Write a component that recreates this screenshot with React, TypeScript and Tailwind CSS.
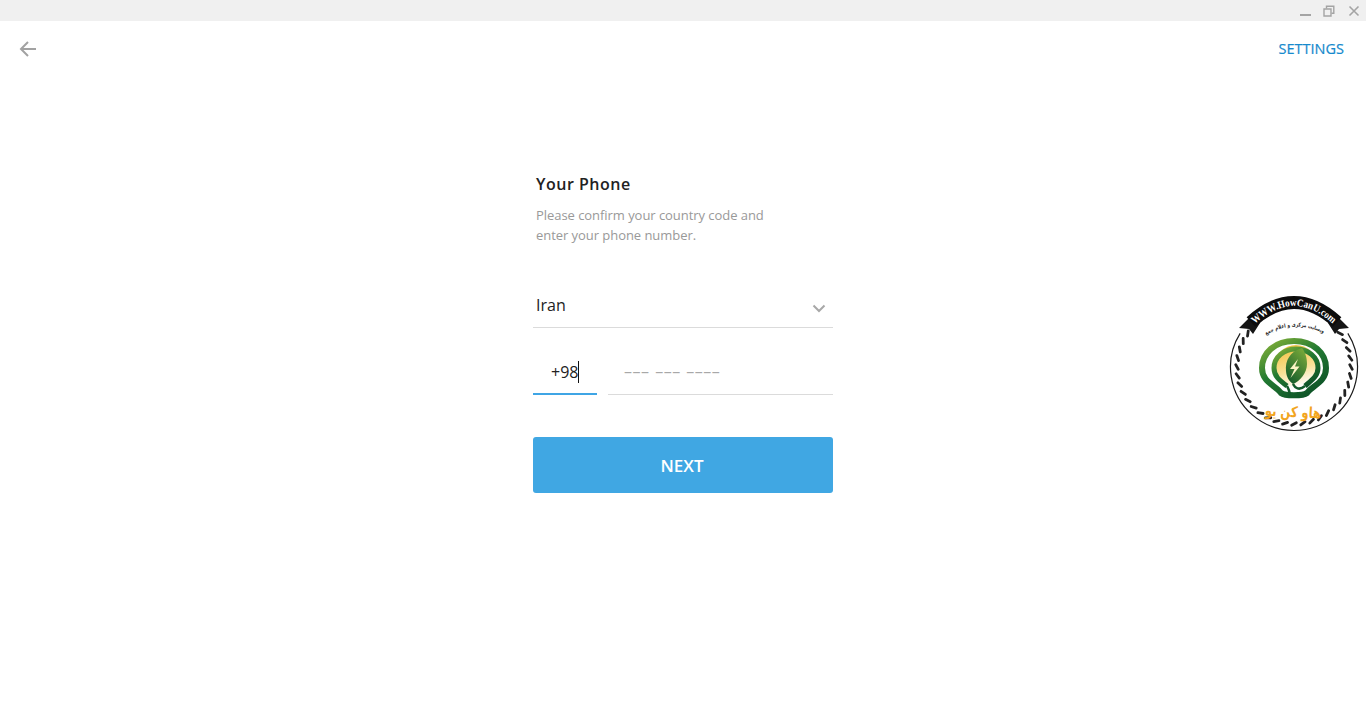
const sans = '"Open Sans", "Noto Sans", sans-serif';

const ropeAngles = Array.from({ length: 40 }, (_, i) => i * 9).filter((a) => a > 52 && a < 308);

function Badge() {
  return (
    <svg width="134" height="140" viewBox="0 0 134 140" className="absolute left-[1227px] top-[293px]">
      <defs>
        <linearGradient id="glow" x1="0.3" y1="0" x2="0.6" y2="1">
          <stop offset="0%" stopColor="#f3c13f" />
          <stop offset="60%" stopColor="#f9e29a" />
          <stop offset="100%" stopColor="#ffffff" />
        </linearGradient>
        <linearGradient id="ring" x1="0.1" y1="0" x2="0.8" y2="1">
          <stop offset="0%" stopColor="#7fae38" />
          <stop offset="45%" stopColor="#237a32" />
          <stop offset="100%" stopColor="#0d5227" />
        </linearGradient>
        <linearGradient id="leaf" x1="0.8" y1="0" x2="0.2" y2="1">
          <stop offset="0%" stopColor="#7aaa3a" />
          <stop offset="100%" stopColor="#125a2a" />
        </linearGradient>
        <path id="ribbonArc" d="M27 32 Q67 -6 107 32" />
        <path id="mottoArc" d="M39 42 Q68 25 100 42" />
      </defs>
      <path d="M13.15 40.35 A63.5 63.5 0 1 0 120.85 40.35" fill="none" stroke="#1b1b1b" strokeWidth="1.2" />
      {ropeAngles.map((a) => (
        <rect
          key={a}
          x="-1.4"
          y="-64"
          width="2.8"
          height="8"
          rx="1.3"
          fill="#222"
          transform={`translate(67 74) rotate(${a}) translate(0 3) rotate(62 0 -60)`}
        />
      ))}
      {/* ribbon */}
      <path d="M23 24 L12 35 L22 36 L26 41 L33 30 Z" fill="#151515" />
      <path d="M111 24 L122 35 L112 36 L108 41 L101 30 Z" fill="#151515" />
      <path d="M24 29 Q67 -10 110 29" fill="none" stroke="#0c0c0c" strokeWidth="13" />
      <text fontSize="10.5" fontWeight="700" fill="white" fontFamily='"Liberation Serif", serif'>
        <textPath href="#ribbonArc" startOffset="1" textLength="88" lengthAdjust="spacingAndGlyphs">
          WWW.HowCanU.com
        </textPath>
      </text>
      <text fontSize="5.5" fontWeight="700" fill="#2a2a2a" fontFamily='"DejaVu Sans", sans-serif'>
        <textPath href="#mottoArc" textLength="60" lengthAdjust="spacingAndGlyphs">
          وبسایت مرکزی و اعلام جمع
        </textPath>
      </text>
      {/* bulb */}
      <path
        d="M67 48 C48 48 35 60 35 75 C35 89 48 92 54 100 C58 103 76 103 80 100 C86 92 99 89 99 75 C99 60 86 48 67 48 Z"
        fill="white"
        stroke="url(#ring)"
        strokeWidth="6"
      />
      <circle cx="69" cy="73" r="21" fill="url(#glow)" />
      <path
        d="M60 93 C52 87 47 83 47 75 C47 64 57 56 69 56 C81 56 91 64 91 75 C91 83 85 87 78 93"
        fill="none"
        stroke="url(#ring)"
        strokeWidth="5"
      />
      <path
        d="M75 55 C63 58 58 68 59 78 C59.500 84 62 88 66 91 C73 88 80 80 80 71 C80 64 78 59 75 55 Z"
        fill="url(#leaf)"
      />
      <path d="M66 91 C68 95 72 98 78 93 M60 93 C62 97 64 100 62 103" fill="none" stroke="#125a2a" strokeWidth="2.500" />
      <path d="M71 66 L63 76 L67.500 76 L63.500 85 L72.500 73.500 L68 73.500 Z" fill="#fbf3c4" />
      {/* brand name */}
      <text
        x="66"
        y="124"
        textAnchor="middle"
        fontSize="15"
        fontWeight="700"
        fill="#f2a51e"
        textLength="56"
        lengthAdjust="spacingAndGlyphs"
        fontFamily='"DejaVu Sans", sans-serif'
        transform="rotate(3 66 120)"
      >
        هاو کن یو
      </text>
    </svg>
  );
}

export default function App() {
  return (
    <div className="relative flex h-[728px] w-[1366px] flex-col overflow-hidden bg-white" style={{ fontFamily: sans }}>
      {/* title bar */}
      <div className="flex h-[21px] items-center justify-end bg-[#f0f0f0] pr-[6px]">
        <svg width="12" height="12" viewBox="0 0 12 12" stroke="#a4a4a4" fill="none" strokeWidth="2">
          <path d="M0 10h11" />
        </svg>
        <svg width="12" height="12" viewBox="0 0 12 12" stroke="#a4a4a4" fill="none" strokeWidth="1.400" className="ml-[11px]">
          <path d="M1 4h7v7H1z" />
          <path d="M3.500 3.500V1.200h7.300v7H8.500" />
        </svg>
        <svg width="12" height="12" viewBox="0 0 12 12" stroke="#a4a4a4" fill="none" strokeWidth="1.600" className="ml-[13px]">
          <path d="M1.500 1.500l9 9M10.500 1.500l-9 9" />
        </svg>
      </div>

      {/* header */}
      <div className="flex h-[56px] items-center justify-between pl-[19px] pr-[22px]">
        <svg width="17" height="16" viewBox="0 0 17 16" stroke="#a2a2a2" fill="none" strokeWidth="2">
          <path d="M17 8H2M9 1L2 8l7 7" />
        </svg>
        <span className="text-[14.500px] leading-[20px] text-[#168acd] [-webkit-text-stroke:0.2px_#168acd]">SETTINGS</span>
      </div>

      {/* form */}
      <div className="mx-auto mt-[96px] flex w-[300px] flex-col">
        <h1 className="pl-[3px] text-[16px] leading-[22px] font-semibold tracking-[0.5px] text-[#222]">Your Phone</h1>
        <p className="mt-[10px] pl-[3px] text-[13px] leading-[20px] tracking-[-0.05px] text-[#999]">
          Please confirm your country code and
          <br />
          enter your phone number.
        </p>

        <div className="mt-[40px] flex h-[43px] items-center justify-between border-b border-[#dbdbdb] pl-[3px] pr-[7px] pb-[2px]">
          <span className="text-[16px] text-[#222]">Iran</span>
          <svg width="14" height="9" viewBox="0 0 14 9" stroke="#a8a8a8" fill="none" strokeWidth="2" className="mt-[6px]">
            <path d="M1.500 1.500L7 7l5.500-5.500" />
          </svg>
        </div>

        <div className="mt-[20px] flex h-[47px] gap-[11px]">
          <div className="flex w-[64px] items-center border-b-2 border-[#3fa5e5] pl-[18px] pt-[3px] text-[16px] text-[#222]">
            <span>+98</span>
            <span className="h-[22px] w-px bg-[#111]" />
          </div>
          <div className="flex flex-1 items-center border-b border-[#dbdbdb] pl-[16px] text-[16px] tracking-[0.5px] [word-spacing:1px] text-[#a8a8a8]">
            ––– ––– ––––
          </div>
        </div>

        <button className="mt-[42px] h-[56px] rounded-[3px] bg-[#40a7e3] pt-[2px] pr-[2px] text-[17px] font-semibold text-white">NEXT</button>
      </div>

      <Badge />
    </div>
  );
}
